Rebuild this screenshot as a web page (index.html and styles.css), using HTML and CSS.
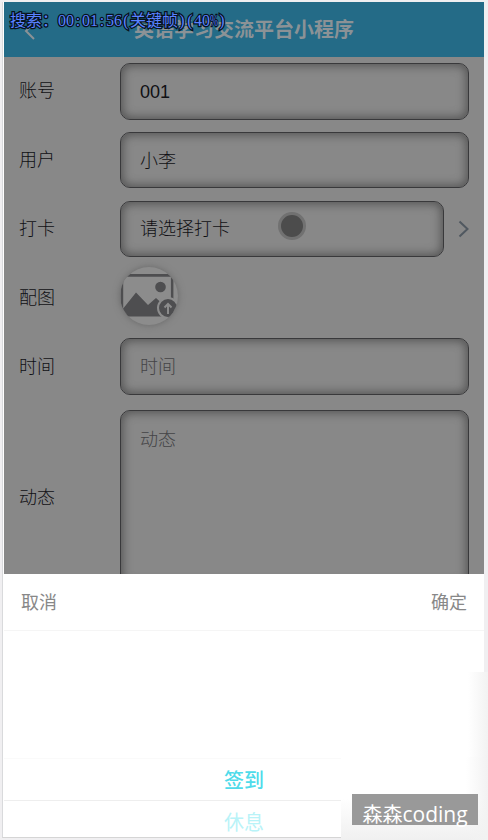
FILE: index.html
```html
<!DOCTYPE html>
<html lang="zh-CN">
<head>
<meta charset="utf-8">
<title>英语学习交流平台小程序</title>
<link rel="stylesheet" href="styles.css">
</head>
<body>
<main class="phone">
  <header class="bar">
    <svg class="back" width="14" height="20" viewBox="0 0 14 20"><path d="M11 2 3 10l8 8"/></svg>
    <h1>英语学习交流平台小程序</h1>
  </header>
  <section class="form">
    <div class="row"><span class="label">账号</span><div class="field">001</div></div>
    <div class="row"><span class="label">用户</span><div class="field">小李</div></div>
    <div class="row"><span class="label">打卡</span><div class="field">请选择打卡<i class="touch"></i></div>
      <svg class="arrow" width="11" height="18" viewBox="0 0 11 18"><path d="m1.5 1.5 8 7.5-8 7.5"/></svg></div>
    <div class="row"><span class="label">配图</span>
      <div class="photo"><svg width="58" height="58" viewBox="0 0 58 58">
        <path class="frame" d="M2 8.500H52V48H2Z"/>
        <path class="blank" d="M3.500 9.800H50.800V47H3.500Z"/>
        <path class="ink" d="M2 43 16 25.500 28 38 36 31 46 40V48.500H2Z"/>
        <circle class="ink" cx="40.500" cy="20" r="5.300"/>
        <circle class="disc" cx="48" cy="41" r="10"/>
        <path class="up" d="M48 47V37M44.500 40.500 48 37l3.500 3.500"/>
      </svg></div></div>
    <div class="row"><span class="label">时间</span><div class="field hint">时间</div></div>
    <div class="row tall"><span class="label">动态</span><div class="field hint area">动态</div></div>
  </section>
  <section class="sheet">
    <div class="actions"><span>取消</span><span>确定</span></div>
    <div class="wheel"><div class="option chosen">签到</div><div class="option next">休息</div></div>
  </section>
</main>
<div class="osd">搜索：00<span class="half">:</span>01<span class="half">:</span>56<span class="half">(</span>关键帧<span class="half">)</span><span class="half">(</span>40<span class="half percent">%</span><span class="half">)</span></div>
<div class="edge"></div>
<div class="corner"><div class="mark">森森<span class="latin">coding</span></div></div>
</body>
</html>
```
FILE: styles.css
```css
* { box-sizing: border-box; }
body {
  margin: 0;
  width: 488px;
  height: 840px;
  padding: 2px 4px 0 2px;
  overflow: hidden;
  position: relative;
  background: #f0eff1;
  font: 300 18px/26px "Liberation Sans", "Noto Sans CJK SC", sans-serif;
}
.phone {
  height: 836px;
  display: flex;
  flex-direction: column;
  overflow: hidden;
  border-left: 1px solid #d9dadc;
  border-bottom: 1px solid #d5d5d5;
  padding-left: 1px;
  background: #fff;
}
.bar {
  flex: none;
  height: 55px;
  display: grid;
  grid-template-columns: 40px 1fr 40px;
  align-items: center;
  background: #246b87;
}
.bar h1 {
  margin: 0;
  text-align: center;
  font-size: 20px;
  line-height: 28px;
  color: #8b9296;
}
.back { margin: 2px 0 0 19px; fill: none; stroke: #8b9296; stroke-width: 2; }
.form {
  flex: none;
  height: 517px;
  padding: 0 15px;
  overflow: hidden;
  background: #888;
  color: #101014;
}
.row { height: 68.800px; display: flex; align-items: center; }
.tall { height: 194px; }
.label { width: 101px; flex: none; }
.field {
  flex: 1;
  height: 56.500px;
  padding: 1px 19px 0;
  display: flex;
  align-items: center;
  position: relative;
  border: 1px solid #39393b;
  border-radius: 10px;
  box-shadow: inset 0 0 10px 2px #555;
}
.hint { color: #444446; }
.area { height: 176px; align-items: flex-start; padding-top: 16px; }
.arrow { margin-left: 14px; fill: none; stroke: #505860; stroke-width: 2; }
.touch {
  position: absolute;
  left: 157px;
  top: 10px;
  width: 28px;
  height: 28px;
  border: 3px solid #717171;
  border-radius: 50%;
  background: #4c4c4c;
}
.photo {
  width: 58px;
  height: 58px;
  margin-top: -4px;
  border-radius: 50%;
  overflow: hidden;
  background: #8c8c8c;
  box-shadow: 0 0 7px #686868;
}
.photo svg { display: block; }
.frame { fill: none; stroke: #4e4e50; stroke-width: 2.800; }
.blank { fill: #8c8c8c; }
.ink { fill: #4e4e50; }
.disc { fill: #4e4e50; stroke: #8c8c8c; stroke-width: 2; }
.up { fill: none; stroke: #8c8c8c; stroke-width: 2; }
.sheet { flex: 1; display: flex; flex-direction: column; background: #fff; }
.actions {
  height: 57px;
  padding: 1px 17px 0;
  display: flex;
  justify-content: space-between;
  align-items: center;
  border-bottom: 1px solid #f5f5f5;
  color: #888;
  font-weight: 400;
}
.wheel { padding-top: 127px; text-align: center; font-size: 20px; }
.option { height: 43px; line-height: 44px; border-top: 1px solid #fafafa; }
.chosen { color: #4fdbea; font-weight: 500; border-bottom: 1px solid #eee; }
.next { color: #b9f3f8; font-weight: 400; border-top: 0; line-height: 45px; }
.osd {
  position: absolute;
  left: 10px;
  top: 9px;
  white-space: nowrap;
  font: 16px/24px "Liberation Serif", "Noto Sans CJK SC", serif;
  color: #5a82ff;
  -webkit-text-stroke: 2.500px #07131d;
  paint-order: stroke fill;
}
.half { display: inline-block; width: 8px; text-align: center; }
.percent { text-indent: -2.700px; transform: scaleX(.6); }
.edge {
  position: absolute;
  left: 468px;
  top: 672px;
  width: 20px;
  height: 168px;
  background: linear-gradient(90deg, #fff, #f2f2f2);
}
.corner {
  position: absolute;
  left: 341px;
  top: 757px;
  width: 147px;
  height: 83px;
  padding: 37px 10px 0 11px;
  background: linear-gradient(90deg, transparent 85%, #f2f2f2), linear-gradient(#fff 50%, #f0f0f0);
}
.mark {
  height: 31px;
  text-align: center;
  white-space: nowrap;
  font: 20px/40px "Noto Sans CJK SC", sans-serif;
  background: #999;
  color: #fff;
}
.latin { font-family: "Open Sans", sans-serif; font-size: 21px; line-height: 1; }
```
